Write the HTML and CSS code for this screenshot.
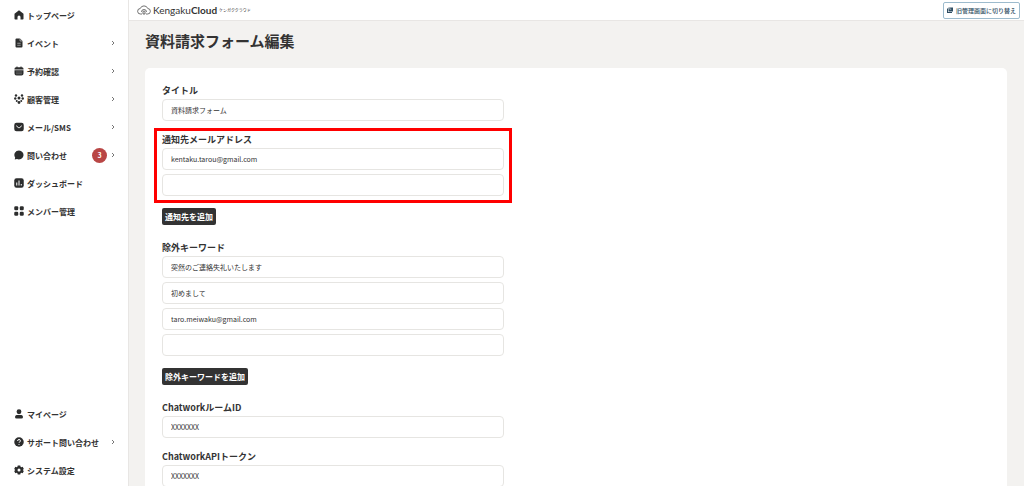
FILE: index.html
```html
<!DOCTYPE html>
<html lang="ja">
<head>
    <meta charset="UTF-8">
    <meta name="viewport" content="width=device-width, initial-scale=1.0">
    <title>資料請求フォーム編集</title>
    <link rel="stylesheet" href="styles.css">
</head>
<body>
    <div class="app">
        <!-- サイドバー -->
        <nav class="sidebar">
            <ul class="menu">
                <li><a class="menu-link" href="#">
                    <svg class="menu-icon" viewBox="0 0 20 20"><path d="M10 .5 1 7.500V17.500a1.500 1.500 0 0 0 1.500 1.500h4.500v-5a3 3 0 0 1 6 0v5h4.500a1.500 1.500 0 0 0 1.500-1.500V7.500z"/></svg>
                    <span>トップページ</span>
                </a></li>
                <li><a class="menu-link" href="#">
                    <svg class="menu-icon" viewBox="0 0 20 20"><path d="M5 1h7l5 5v11a2 2 0 0 1-2 2H5a2 2 0 0 1-2-2V3a2 2 0 0 1 2-2z"/><path class="cut thin" d="M12 1v5h5M6.500 10.500h7M6.500 14.500h7"/></svg>
                    <span>イベント</span>
                    <svg class="chevron" viewBox="0 0 6 6"><path d="M2 1l2 2-2 2"/></svg>
                </a></li>
                <li><a class="menu-link" href="#">
                    <svg class="menu-icon" viewBox="0 0 20 20"><path d="M4 2.500h1V1h2v1.500h6V1h2v1.500h1a3 3 0 0 1 3 3V7H1V5.500a3 3 0 0 1 3-3zM1 8.500h18V15a4 4 0 0 1-4 4H5a4 4 0 0 1-4-4z"/><path class="cut thin" d="M5 12h2M9 12h2M13 12h2M5 15.500h2M9 15.500h2M13 15.500h2"/></svg>
                    <span>予約確認</span>
                    <svg class="chevron" viewBox="0 0 6 6"><path d="M2 1l2 2-2 2"/></svg>
                </a></li>
                <li><a class="menu-link" href="#">
                    <svg class="menu-icon" viewBox="0 0 20 20"><circle cx="4" cy="3" r="2.400"/><circle cx="16" cy="3" r="2.400"/><circle cx="10" cy="8" r="3"/><circle cx="2.500" cy="9" r="2.400"/><circle cx="17.500" cy="9" r="2.400"/><circle cx="5.500" cy="14" r="2"/><circle cx="14.500" cy="14" r="2"/><circle cx="10" cy="17" r="2.800"/></svg>
                    <span>顧客管理</span>
                    <svg class="chevron" viewBox="0 0 6 6"><path d="M2 1l2 2-2 2"/></svg>
                </a></li>
                <li><a class="menu-link" href="#">
                    <svg class="menu-icon" viewBox="0 0 20 20"><rect x="0.500" y="1.500" width="19" height="17" rx="4.500"/><path class="cut" d="M4.500 7.500 8.500 11q1.500 1 3 0l4-3.500"/></svg>
                    <span>メール/SMS</span>
                    <svg class="chevron" viewBox="0 0 6 6"><path d="M2 1l2 2-2 2"/></svg>
                </a></li>
                <li><a class="menu-link" href="#">
                    <svg class="menu-icon" viewBox="0 0 20 20"><path d="M10 1a9.200 9 0 1 1-4 17.200L1.500 19l.8-4A9.200 9 0 0 1 10 1z"/></svg>
                    <span>問い合わせ</span>
                    <span class="badge">3</span>
                    <svg class="chevron" viewBox="0 0 6 6"><path d="M2 1l2 2-2 2"/></svg>
                </a></li>
                <li><a class="menu-link" href="#">
                    <svg class="menu-icon" viewBox="0 0 20 20"><rect x="0.500" y="0.500" width="19" height="19" rx="4.500"/><path class="cut" d="M5.500 9v6M10 5v10M14.500 12v3"/></svg>
                    <span>ダッシュボード</span>
                </a></li>
                <li><a class="menu-link" href="#">
                    <svg class="menu-icon" viewBox="0 0 20 20"><rect x="0.500" y="0.500" width="8" height="8" rx="2.500"/><rect x="11.500" y="0.500" width="8" height="8" rx="2.500"/><rect x="0.500" y="11.500" width="8" height="8" rx="2.500"/><rect x="11.500" y="11.500" width="8" height="8" rx="2.500"/></svg>
                    <span>メンバー管理</span>
                </a></li>
            </ul>
            <ul class="menu">
                <li><a class="menu-link" href="#">
                    <svg class="menu-icon" viewBox="0 0 20 20"><circle cx="10" cy="5.500" r="4.800"/><path d="M5 12h10q3 1 3 4t-3 3H5q-3 0-3-3t3-4z"/></svg>
                    <span>マイページ</span>
                </a></li>
                <li><a class="menu-link" href="#">
                    <svg class="menu-icon" viewBox="0 0 20 20"><circle cx="10" cy="10" r="9.500"/><path class="cut" d="M7.200 8q0-3 2.800-3t2.800 2.500q0 1.500-1.500 2.500T10 12M10 14v1.800"/></svg>
                    <span>サポート問い合わせ</span>
                    <svg class="chevron" viewBox="0 0 6 6"><path d="M2 1l2 2-2 2"/></svg>
                </a></li>
                <li><a class="menu-link" href="#">
                    <svg class="menu-icon" viewBox="0 0 20 20"><path fill-rule="evenodd" d="M7.500 1h5l.6 2.500 1.700 1 2.500-.8 2.400 4.200-1.900 1.800v.6l1.900 1.800-2.400 4.200-2.500-.8-1.700 1-.6 2.500h-5l-.6-2.500-1.700-1-2.500.8L.3 12.100l1.900-1.800v-.6L.3 7.900l2.400-4.200 2.500.8 1.700-1zM10 7a3 3 0 1 0 0 6 3 3 0 0 0 0-6z"/></svg>
                    <span>システム設定</span>
                </a></li>
            </ul>
        </nav>

        <div class="content">
            <!-- ヘッダー -->
            <header class="header">
                <a class="logo" href="#">
                    <svg class="logo-mark" viewBox="0 0 28 20"><path d="M10 18H7a5.500 5.500 0 0 1-.5-11A8 8 0 0 1 21.500 7a5.500 5.500 0 0 1-.5 11h-3"/><path d="M9 14a5 5 0 1 1 10 0M12 18v-4a2 2 0 0 1 4 0v4z"/></svg>
                    <span class="logo-name">Kengaku<b>Cloud</b></span>
                    <span class="logo-kana">ケンガククラウド</span>
                </a>
                <button class="switch-button" type="button">
                    <svg class="switch-icon" viewBox="0 0 12 12"><path d="M3 1h9v8H3z"/><path d="M0 3h2v7h8v2H0z"/><path class="shine" d="M5.500 1v3.500h3"/></svg>
                    旧管理画面に切り替え
                </button>
            </header>

            <main class="main">
                <h1 class="page-title">資料請求フォーム編集</h1>

                <form class="card">
                    <div class="field">
                        <label class="label" for="title">タイトル</label>
                        <input class="input" id="title" type="text" value="資料請求フォーム">
                    </div>

                    <div class="field highlight">
                        <label class="label" for="mail1">通知先メールアドレス</label>
                        <input class="input" id="mail1" type="text" value="kentaku.tarou@gmail.com">
                        <input class="input" type="text" aria-label="通知先メールアドレス 2">
                    </div>
                    <button class="add-button" type="button">通知先を追加</button>

                    <div class="field">
                        <label class="label" for="word1">除外キーワード</label>
                        <input class="input" id="word1" type="text" value="突然のご連絡失礼いたします">
                        <input class="input" type="text" value="初めまして" aria-label="除外キーワード 2">
                        <input class="input" type="text" value="taro.meiwaku@gmail.com" aria-label="除外キーワード 3">
                        <input class="input" type="text" aria-label="除外キーワード 4">
                    </div>
                    <button class="add-button" type="button">除外キーワードを追加</button>

                    <div class="field">
                        <label class="label" for="room">ChatworkルームID</label>
                        <input class="input" id="room" type="text" value="XXXXXXX">
                    </div>

                    <div class="field">
                        <label class="label" for="token">ChatworkAPIトークン</label>
                        <input class="input" id="token" type="text" value="XXXXXXX">
                    </div>
                </form>
            </main>
        </div>
    </div>
</body>
</html>
```
FILE: styles.css
```css
* {
    box-sizing: border-box;
}

body {
    margin: 0;
    font-family: "Noto Sans CJK JP", sans-serif;
    color: #333;
    background: #f3f2f0;
}

button,
input {
    font-family: inherit;
    color: inherit;
}

.app {
    display: flex;
    height: 100vh;
}

/* サイドバー */
.sidebar {
    display: flex;
    flex-direction: column;
    justify-content: space-between;
    flex: 0 0 129px;
    padding: 1px 0 2px;
    background: #fff;
    border-right: 1px solid #e8e6e4;
}

.menu {
    margin: 0;
    padding: 0;
    list-style: none;
}

.menu-link {
    display: flex;
    align-items: center;
    gap: 3px;
    height: 28px;
    padding: 0 12px 0 14px;
    font-size: 8px;
    font-weight: bold;
    color: #333;
    text-decoration: none;
    white-space: nowrap;
}

.menu-icon {
    width: 10px;
    height: 10px;
    fill: #2c2d2d;
}

.cut {
    fill: none;
    stroke: #fff;
    stroke-width: 2;
}

.thin {
    stroke-width: 1;
}

.chevron {
    width: 6px;
    height: 6px;
    margin-left: auto;
    fill: none;
    stroke: #777;
    stroke-width: 1;
}

.badge {
    width: 15px;
    height: 15px;
    margin-left: auto;
    border-radius: 50%;
    background: #b94645;
    color: #fff;
    font-size: 7px;
    line-height: 15px;
    text-align: center;
}

.badge + .chevron {
    margin-left: 0;
}

/* ヘッダー */
.content {
    display: flex;
    flex-direction: column;
    flex: 1;
    min-width: 0;
}

.header {
    display: flex;
    align-items: center;
    justify-content: space-between;
    flex: 0 0 21px;
    padding: 0 4px 0 8px;
    background: #fff;
    border-bottom: 1px solid #e8e6e4;
}

.logo {
    display: flex;
    align-items: center;
    gap: 2px;
    color: #333;
    text-decoration: none;
}

.logo-mark {
    width: 14px;
    height: 10px;
    fill: none;
    stroke: #444;
    stroke-width: 1.500;
}

.logo-name {
    font-family: Lato, sans-serif;
    font-size: 10px;
    line-height: 16px;
}

.logo-kana {
    font-size: 4px;
}

.switch-button {
    display: flex;
    align-items: center;
    gap: 3px;
    height: 17px;
    padding: 0 3px;
    border: 1px solid #9dbbcd;
    border-radius: 2px;
    background: #fff;
    color: #2f4d62;
    font-size: 6px;
    font-weight: 500;
}

.switch-icon {
    width: 6px;
    height: 6px;
    fill: #2f4d62;
}

.shine {
    fill: none;
    stroke: #fff;
}

/* フォーム */
.main {
    flex: 1;
    min-height: 0;
    padding: 8px 17px 17px 16px;
    overflow-y: auto;
    scrollbar-width: none;
}

.page-title {
    margin: 0 0 15px;
    font-size: 15px;
    line-height: 24px;
}

.card {
    padding: 14px 17px 17px;
    border-radius: 5px;
    background: #fff;
}

.field {
    display: flex;
    flex-direction: column;
    gap: 4px;
    width: 100%;
    max-width: 342px;
}

.field + .field {
    margin-top: 10px;
}

.label {
    margin-bottom: -5px;
    font-size: 9px;
    font-weight: bold;
    line-height: 18px;
}

.input {
    width: 100%;
    height: 22px;
    padding: 0 8px;
    border: 1px solid #e6e5e2;
    border-radius: 4px;
    background: #fff;
    font-size: 7px;
}

/* 注目してほしい項目の赤枠 */
.highlight {
    position: relative;
}

.highlight::after {
    content: "";
    position: absolute;
    inset: -3px -8px -7px;
    border: 3px solid #f00;
    pointer-events: none;
}

.add-button {
    display: block;
    height: 17px;
    margin: 12px 0 14px;
    padding: 0 3px;
    border: 0;
    border-radius: 2px;
    background: #333;
    color: #fff;
    font-size: 8px;
    font-weight: bold;
}
```
